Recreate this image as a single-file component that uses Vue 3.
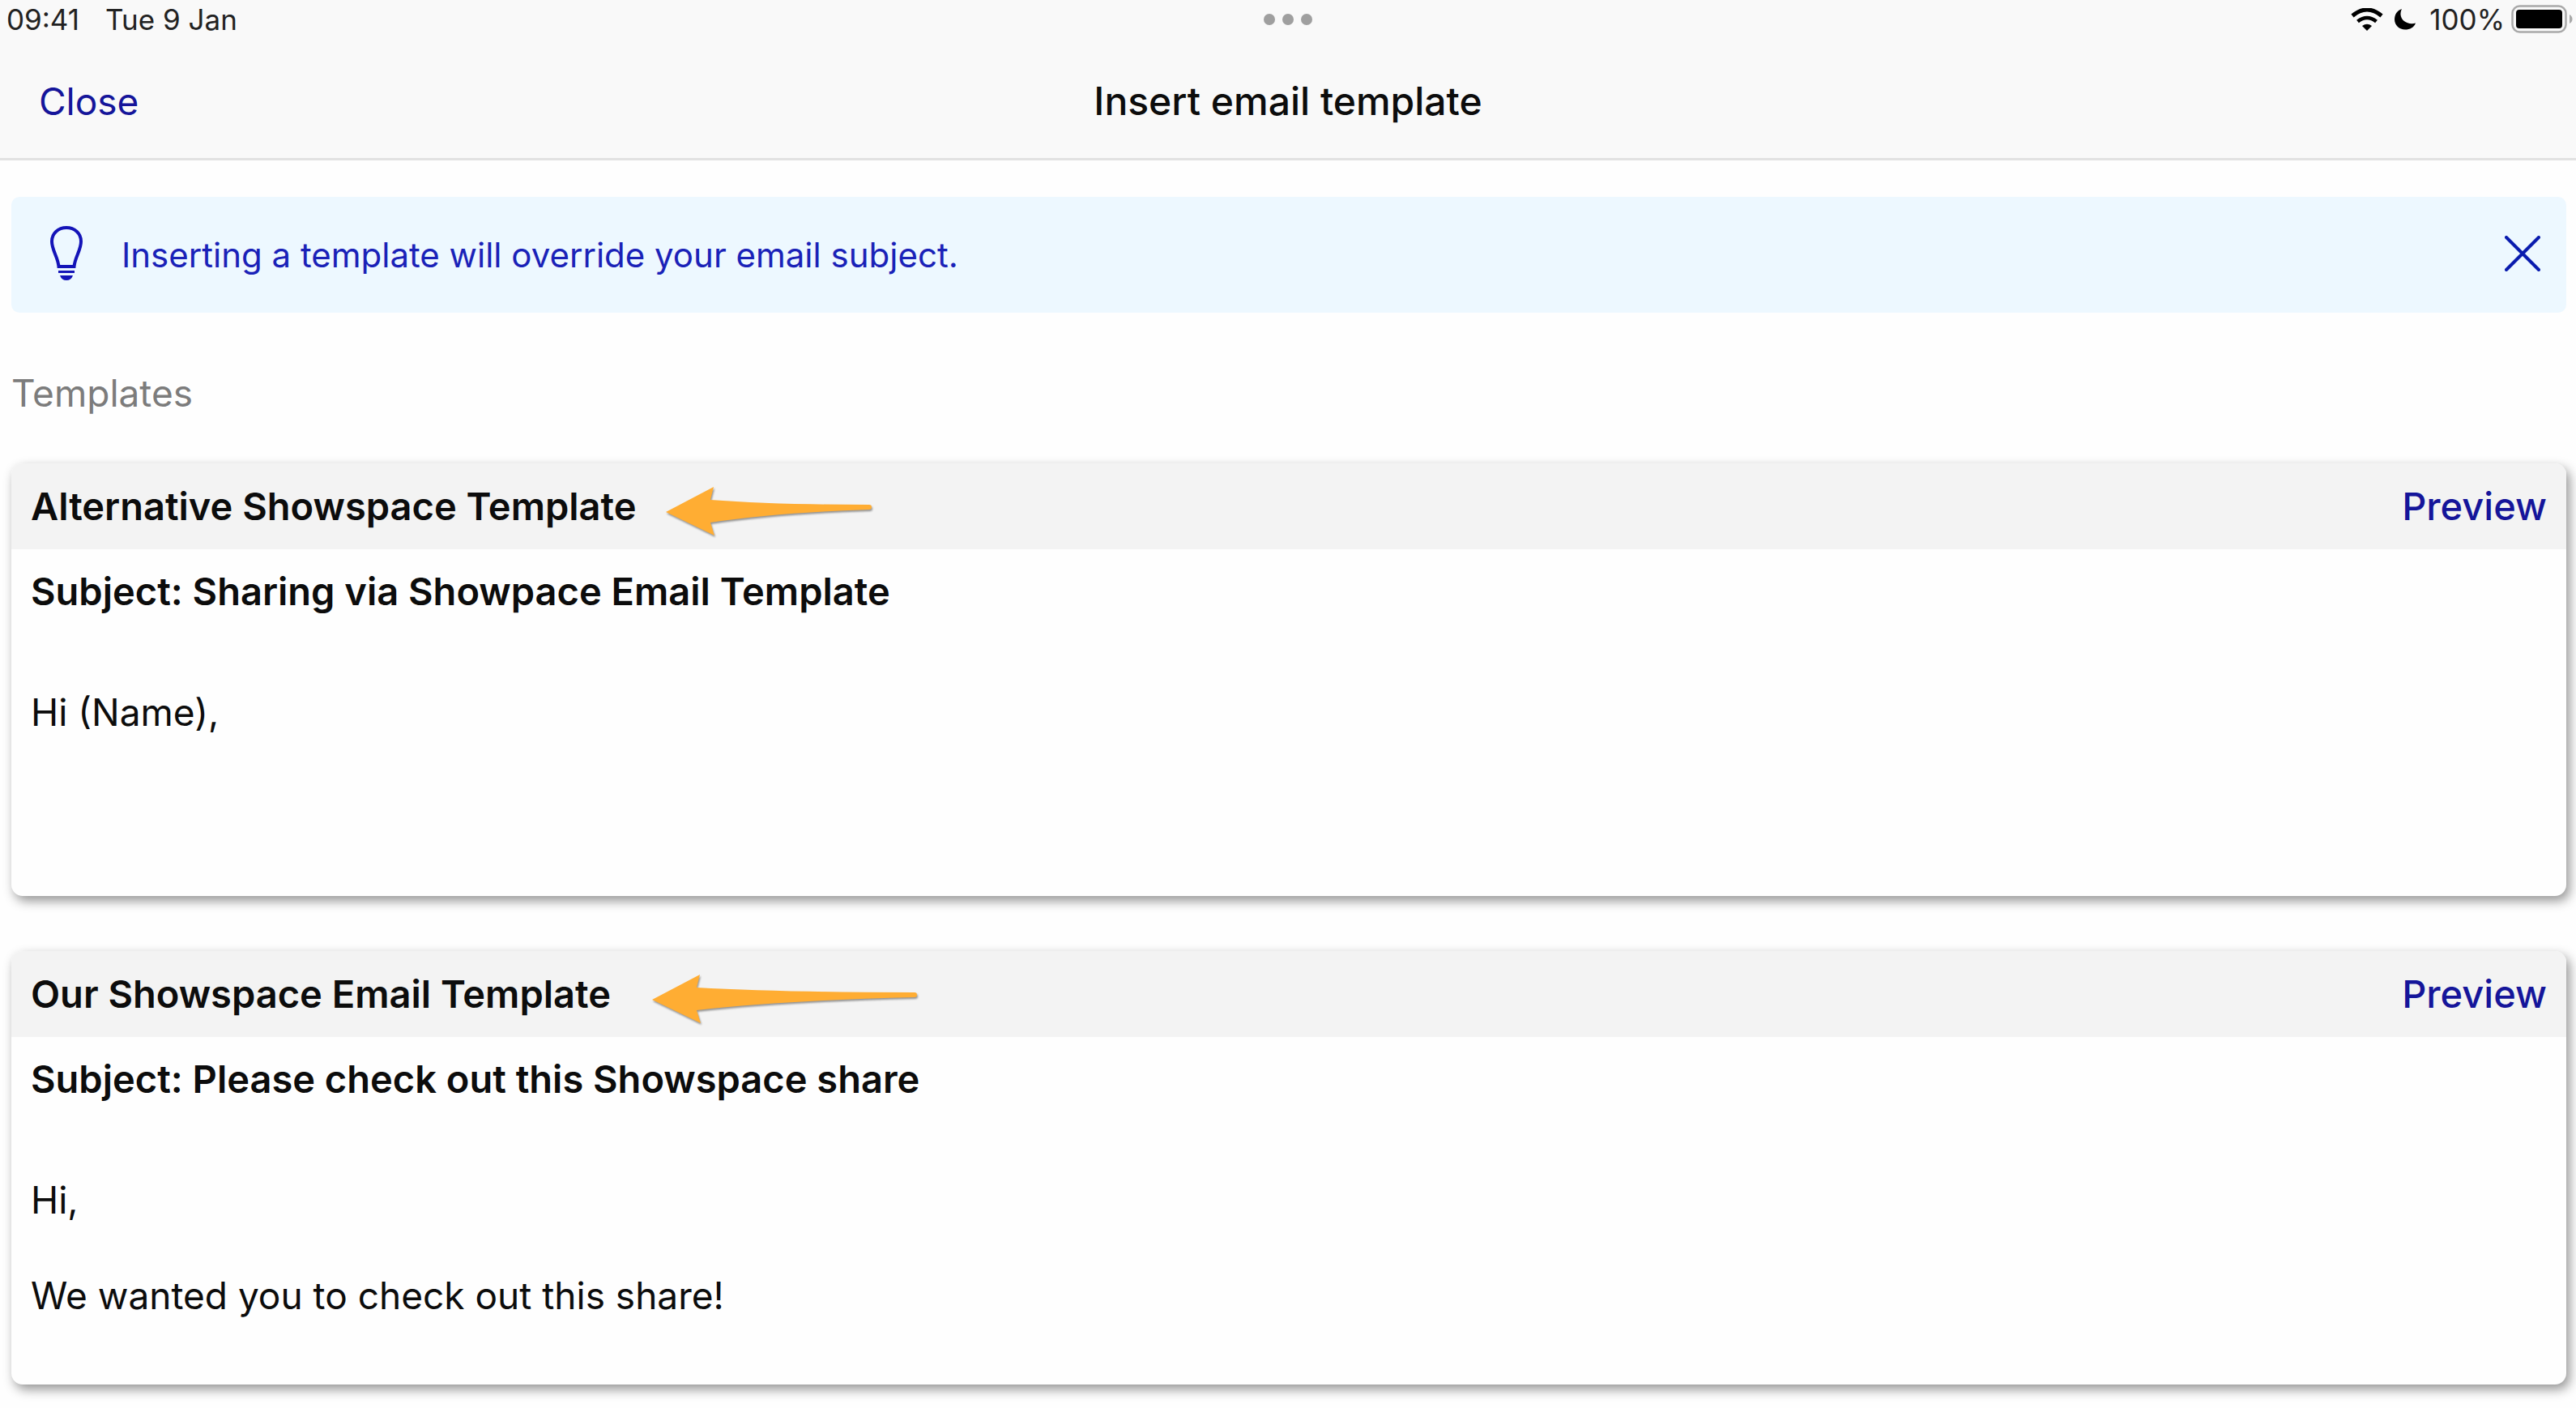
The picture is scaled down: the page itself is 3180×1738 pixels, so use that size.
<script setup>
import { ref } from "vue";

const showTip = ref(true);

// arrow.left / arrow.length are in px inside the card header
const templates = ref([
  {
    id: 1,
    name: "Alternative Showspace Template",
    subject: "Sharing via Showpace Email Template",
    lines: ["Hi (Name),"],
    arrow: { left: 808, length: 254 },
  },
  {
    id: 2,
    name: "Our Showspace Email Template",
    subject: "Please check out this Showspace share",
    lines: ["Hi,", "We wanted you to check out this share!"],
    arrow: { left: 791, length: 327 },
  },
]);

function arrowPath(len) {
  const end = len - 3;
  const mid = 55 + (end - 55) * 0.4;
  return `M0 31 L59 0 L55 16 Q${mid} 22 ${end} 22 Q${len} 22 ${len} 25 Q${len} 28 ${end} 28 Q${mid} 32 55 44 L60 60 Z`;
}
</script>

<template>
  <div class="page">
    <header class="top">
      <div class="status">
        <div class="status-left">
          <span>09:41</span>
          <span>Tue 9 Jan</span>
        </div>
        <div class="dots"><i></i><i></i><i></i></div>
        <div class="status-right">
          <svg class="wifi" width="40" height="28" viewBox="0 0 40 28">
            <path d="M2 9.500 Q20 -5.500 38 9.500" fill="none" stroke="#000" stroke-width="5" />
            <path d="M8.500 16.500 Q20 7.500 31.500 16.500" fill="none" stroke="#000" stroke-width="4.600" />
            <path d="M14 22 Q20 17.500 26 22 L20 28 Z" fill="#000" />
          </svg>
          <svg class="moon" width="28" height="28" viewBox="0 0 28 28">
            <path d="M10 1 C4 3 1 8 1 14 C1 21 7 26.500 14 26.500 C20 26.500 25 24 27 18.500 C18 21 9 16 8.500 8 C8.400 5 9 3 10 1 Z" fill="#000" />
          </svg>
          <span class="percent">100%</span>
          <svg class="battery" width="76" height="36" viewBox="0 0 76 36">
            <rect x="1.500" y="1.500" width="66" height="32" rx="9" fill="none" stroke="#a9a9a9" stroke-width="2.500" />
            <rect x="6" y="6" width="57" height="23" rx="4" fill="#000" />
            <path d="M72 12 Q75.500 14 75.500 17.500 Q75.500 21 72 23 Z" fill="#a9a9a9" />
          </svg>
        </div>
      </div>
      <nav class="bar">
        <button type="button" class="link close">Close</button>
        <h1>Insert email template</h1>
      </nav>
    </header>

    <main>
      <div v-if="showTip" class="tip">
        <svg class="bulb" width="40" height="68" viewBox="0 0 40 68">
          <path d="M10.500 50 L29.500 50 C30.500 38 38 30 38 19 C38 9 30 2 20 2 C10 2 2 9 2 19 C2 30 9.500 38 10.500 50 Z" fill="none" stroke="#1414b8" stroke-width="4" />
          <path d="M10 56.500 H30" stroke="#1414b8" stroke-width="3" />
          <path d="M12 61 H28 Q26 67 20 67 Q14 67 12 61 Z" fill="#1414b8" />
        </svg>
        <p>Inserting a template will override your email subject.</p>
        <button type="button" class="dismiss" aria-label="Dismiss" @click="showTip = false">
          <svg width="44" height="44" viewBox="0 0 44 44">
            <path d="M2 2 L42 42 M42 2 L2 42" stroke="#0a1cae" stroke-width="4" stroke-linecap="round" />
          </svg>
        </button>
      </div>

      <h2>Templates</h2>

      <section v-for="item in templates" :key="item.id" class="card">
        <div class="card-head">
          <h3>{{ item.name }}</h3>
          <button type="button" class="link preview">Preview</button>
          <svg class="arrow" :style="{ left: item.arrow.left + 'px' }" :width="item.arrow.length" height="60">
            <path :d="arrowPath(item.arrow.length)" fill="#ffad33" />
          </svg>
        </div>
        <div class="card-body">
          <h4>Subject: {{ item.subject }}</h4>
          <p v-for="line in item.lines" :key="line">{{ line }}</p>
        </div>
      </section>
    </main>
  </div>
</template>

<style>
body {
  margin: 0;
  background: #fefefe;
}
</style>

<style scoped>
.page {
  font-family: Inter, "Liberation Sans", sans-serif;
  font-size: 46px;
  line-height: 60px;
  color: #0c0c0c;
}

h1,
h2,
h3,
h4,
p {
  margin: 0;
  font-size: inherit;
  font-weight: 400;
}

button {
  padding: 0;
  border: 0;
  background: none;
  font: inherit;
  cursor: pointer;
}

.top {
  background: #f9f9f9;
  border-bottom: 3px solid #e2e2e2;
}

.status {
  display: grid;
  grid-template-columns: 1fr auto 1fr;
  align-items: center;
  height: 48px;
  padding: 0 4px;
  font-size: 35px;
  line-height: 48px;
  color: #222;
}

.status-left {
  display: flex;
  gap: 32px;
  padding-left: 4px;
}

.dots {
  display: flex;
  gap: 9px;
}

.dots i {
  width: 14px;
  height: 14px;
  border-radius: 50%;
  background: #9f9f9f;
}

.status-right {
  display: flex;
  align-items: center;
  justify-content: flex-end;
}

.moon {
  margin-left: 13px;
}

.percent {
  margin-left: 16px;
}

.battery {
  margin-left: 8px;
}

.bar {
  display: grid;
  grid-template-columns: 1fr auto 1fr;
  align-items: center;
  height: 141px;
  padding: 6px 48px 0;
}

.bar h1 {
  font-size: 48px;
  font-weight: 500;
}

.link {
  color: #15159a;
}

.close {
  justify-self: start;
}

main {
  padding: 45px 12px 30px 14px;
}

.tip {
  display: flex;
  align-items: center;
  height: 139px;
  padding: 0 32px 4px 48px;
  border-radius: 10px;
  background: #edf8ff;
  color: #1a22b8;
  font-size: 42px;
}

.tip p {
  flex: 1;
  margin-left: 48px;
  padding-top: 4px;
}

.dismiss {
  display: flex;
}

h2 {
  margin: 69px 0 57px;
  color: #7c7c7c;
}

.card {
  min-height: 534px;
  margin-bottom: 68px;
  border-radius: 14px;
  background: #fefefe;
  box-shadow: 4px 6px 14px rgba(0, 0, 0, 0.42);
}

.card:last-child {
  margin-bottom: 0;
}

.card-head {
  position: relative;
  display: flex;
  align-items: center;
  justify-content: space-between;
  height: 106px;
  padding: 0 24px;
  border-radius: 14px 14px 0 0;
  background: #f3f3f3;
}

.card-head h3,
.card-body h4 {
  font-size: 47px;
  font-weight: 600;
}

.preview {
  font-size: 47px;
  font-weight: 500;
}

/* pointer drawn over the header */
.arrow {
  position: absolute;
  top: 29px;
  overflow: visible;
  filter: drop-shadow(1px 2px 1px rgba(0, 0, 0, 0.4));
}

.card-body {
  padding: 22px 24px;
}

.card-body h4 {
  margin-bottom: 89px;
}

.card-body p {
  margin-bottom: 58px;
}
</style>
